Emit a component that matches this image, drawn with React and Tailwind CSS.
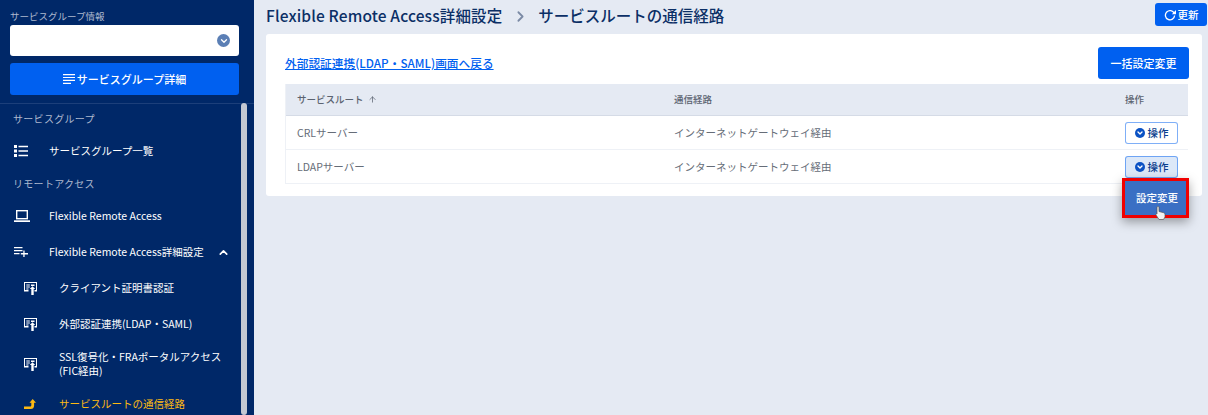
import React from 'react';
import { ChevronDown, ChevronRight, ChevronUp, ArrowUp } from 'lucide-react';

const font = { fontFamily: '"Noto Sans CJK JP", "Noto Sans", sans-serif' };

const ListIcon = () => (
    <svg width="14" height="12" viewBox="0 0 14 12" className="shrink-0">
        <path d="M0 0h3v3H0zM0 4.500h3v3H0zM0 9h3v3H0z" fill="#fff" />
        <path d="M4.500 .7H14v1.600H4.500zM4.500 5.200H14v1.600H4.500zM4.500 9.700H14v1.600H4.500z" fill="#fff" />
    </svg>
);

const LaptopIcon = () => (
    <svg width="16" height="12" viewBox="0 0 16 12" className="shrink-0">
        <rect x="2.700" y="0.700" width="10.600" height="8" fill="none" stroke="#fff" strokeWidth="1.400" />
        <path d="M0 10.300h16V12H0z" fill="#fff" />
    </svg>
);

const ListAddIcon = () => (
    <svg width="14" height="10" viewBox="0 0 14 10" className="shrink-0">
        <path d="M0 0h8.500v1.300H0zM0 3h8.500v1.300H0zM0 6h5.500v1.300H0z" fill="#fff" />
        <path d="M9.300 3.500h1.300v2.600H14v1.300h-3.400V10H9.300V7.400H6.800V6.100h2.500z" fill="#fff" />
    </svg>
);

// staggered text lines on the service group button
const DetailIcon = () => (
    <svg width="12" height="10" viewBox="0 0 12 10" className="shrink-0">
        <path d="M0 0h12v1.200H0zM0 2.900h12v1.200H0zM0 5.800h12v1.200H0zM0 8.700h8v1.200H0z" fill="#fff" />
    </svg>
);

// small card + arrow icon used by the submenu rows
const CardIcon = () => (
    <svg width="13" height="13" viewBox="0 0 13 13" fill="none" className="shrink-0">
        <path d="M0 0h13v9.500H10.500V8H12V1H1v7h3.500v1.500H0z" fill="#fff" />
        <path d="M2.300 2.600h3.500v1H2.300zM2.300 4.600h3.500v1H2.300zM2.300 6.500h2.200v1H2.300z" fill="#fff" />
        <path d="M7 2.500h3.500v1.500H7z" fill="#fff" />
        <path d="M7.300 13V7H5.800l2.700-2.700L11.200 7H9.700v6z" fill="#fff" />
    </svg>
);

const TurnIcon = () => (
    <svg width="13" height="10" viewBox="0 0 13 10" className="shrink-0">
        <path d="M0 7.500h6c.8 0 1.300-.5 1.300-1.300V3.800H5.500L8.700 0l3.300 3.800h-1.900v2.900c0 2-1.300 3.300-3.300 3.300H0z" fill="#fdb913" />
    </svg>
);

const RefreshIcon = () => (
    <svg width="12" height="12" viewBox="0 0 12 12" fill="none" className="shrink-0">
        <path d="M10.200 4.300A4.600 4.600 0 1 0 10.600 6.500" stroke="#fff" strokeWidth="1.300" />
        <path d="M12 1v4.200H7.800z" fill="#fff" />
    </svg>
);

const SectionLabel = ({ children }) => (
    <div className="h-[29px] pl-[13px] flex items-center text-[10px] text-[#aeb9cf] tracking-[0.3px]">{children}</div>
);

const MenuRow = ({ icon, children, right }) => (
    <div className="h-[36px] pl-[14px] pr-[24px] flex items-center text-[10.500px] text-white">
        <div className="w-[35px] shrink-0 flex items-center">{icon}</div>
        <span className="flex-1">{children}</span>
        {right}
    </div>
);

const SubRow = ({ icon, children, active, tall }) => (
    <div className={`pl-[24px] pr-[20px] flex items-center text-[10.500px] ${tall ? 'h-[44px] leading-[14px]' : 'h-[36px]'} ${active ? 'text-[#fdb913]' : 'text-white'}`}>
        <div className="w-[35px] shrink-0 flex items-center">{icon}</div>
        <span>{children}</span>
    </div>
);

const Sidebar = () => (
    <aside className="relative w-[254px] h-full shrink-0 bg-[#002868] overflow-hidden">
        {/* Service group picker */}
        <div className="pl-[10px] pr-[15px] pt-[9px] pb-[8px] border-b border-[#1c3f7a]">
            <div className="text-[9.500px] leading-[14px] text-[#aeb9cf]">サービスグループ情報</div>
            <div className="mt-[2px] h-[31px] rounded-[3px] bg-white flex items-center justify-end pr-[9px]">
                <span className="w-[13px] h-[13px] rounded-full bg-[#5b7fb5] flex items-center justify-center">
                    <ChevronDown size={10} strokeWidth={3} color="#fff" />
                </span>
            </div>
            <button className="mt-[7px] w-full h-[32px] rounded-[3px] bg-[#0060f0] text-white text-[11px] font-medium flex items-center justify-center gap-[2px]">
                <DetailIcon />
                サービスグループ詳細
            </button>
        </div>

        {/* Navigation */}
        <nav>
            <SectionLabel>サービスグループ</SectionLabel>
            <MenuRow icon={<ListIcon />}>サービスグループ一覧</MenuRow>
            <SectionLabel>リモートアクセス</SectionLabel>
            <MenuRow icon={<LaptopIcon />}>Flexible Remote Access</MenuRow>
            <MenuRow icon={<ListAddIcon />} right={<ChevronUp size={13} strokeWidth={3} />}>
                Flexible Remote Access詳細設定
            </MenuRow>
            <SubRow icon={<CardIcon />}>クライアント証明書認証</SubRow>
            <SubRow icon={<CardIcon />}>外部認証連携(LDAP・SAML)</SubRow>
            <SubRow icon={<CardIcon />} tall>SSL復号化・FRAポータルアクセス<br />(FIC経由)</SubRow>
            <SubRow icon={<TurnIcon />} active>サービスルートの通信経路</SubRow>
        </nav>

        {/* Scrollbar thumb */}
        <div className="absolute left-[241px] top-[103px] bottom-0 w-[6px] rounded-full bg-[#c3c8d2]" />
    </aside>
);

const Row = ({ name, open }) => (
    <div className="h-[34px] flex items-center border-b border-[#eef1f6] text-[10.500px] text-[#666d78]">
        <div className="w-[388px] pl-[11px]">{name}</div>
        <div className="flex-1">インターネットゲートウェイ経由</div>
        <div className="w-[64px] pr-[10px] flex justify-end">
            <button className={`w-[53px] h-[22px] rounded-[3px] border border-[#0060f0]/50 flex items-center justify-center gap-[3px] text-[10.500px] text-[#0b3f8f] font-medium ${open ? 'bg-[#dce8f8]' : 'bg-white'}`}>
                <span className="w-[10px] h-[10px] rounded-full bg-[#0b52c4] flex items-center justify-center">
                    <ChevronDown size={8} strokeWidth={4} color="#fff" />
                </span>
                操作
            </button>
        </div>
    </div>
);

const App = () => {
    return (
        <div style={font} className="w-[1208px] h-[415px] flex overflow-hidden bg-[#e5eaf3]">
            <Sidebar />

            <main className="flex-1 min-w-0 pl-[12px] pr-[1px] pt-[3px]">
                {/* Page title */}
                <div className="h-[31px] flex items-start justify-between">
                    <div className="flex items-center h-[26px] text-[15.500px] font-medium text-[#0b2f66]">
                        <span className="tracking-[0.15px]">Flexible Remote Access詳細設定</span>
                        <ChevronRight size={17} strokeWidth={2.500} color="#7b8aa5" className="ml-[10px] mr-[9px]" />
                        <span>サービスルートの通信経路</span>
                    </div>
                    <button className="w-[52px] h-[23px] rounded-[3px] bg-[#0060f0] text-white text-[10.500px] font-medium flex items-center justify-center gap-[2px]">
                        <RefreshIcon />
                        更新
                    </button>
                </div>

                {/* Card */}
                <div className="relative w-[936px] h-[162px] rounded-[3px] bg-white pl-[19px] pr-[13px] pt-[13px]">
                    <div className="h-[32px] flex items-center justify-between">
                        <a href="#" className="text-[11.700px] font-medium text-[#0060f0] underline">外部認証連携(LDAP・SAML)画面へ戻る</a>
                        <button className="w-[91px] h-[32px] rounded-[3px] bg-[#0060f0] text-white text-[11px] font-medium">一括設定変更</button>
                    </div>

                    <div className="mt-[5px] w-[903px] border-l border-[#eef1f6]">
                        <div className="h-[32px] flex items-center bg-[#e5eaf3] border-b border-[#d5dbe6] text-[9.500px] font-medium text-[#5b6370]">
                            <div className="w-[388px] pl-[11px] flex items-center gap-[4px]">
                                サービスルート
                                <ArrowUp size={9} strokeWidth={2} />
                            </div>
                            <div className="flex-1">通信経路</div>
                            <div className="w-[64px] pr-[10px] flex justify-end">
                                <span className="w-[53px]">操作</span>
                            </div>
                        </div>
                        <Row name="CRLサーバー" />
                        <Row name="LDAPサーバー" open />
                    </div>

                    {/* Open dropdown with highlight frame */}
                    <div className="absolute left-[856px] top-[144px] w-[67px] h-[40px] border-[3px] border-[#f00000] bg-[#3a6fc4] shadow-[0_4px_10px_rgba(0,0,0,0.35)] pl-[11px] pt-[9px] text-[10.500px] font-medium text-white">
                        設定変更
                    </div>
                    {/* Mouse pointer */}
                    <svg width="11" height="16" viewBox="0 0 11 15" className="absolute left-[889px] top-[171px]">
                        <path d="M3 1c.7 0 1 .5 1 1v4l4 1c1 .3 2 .8 2 2v2.500L8.500 14H4L1 9.500c-.5-1 .7-1.700 1-1V2c0-.5.400-1 1-1z" fill="#f3f3f3" stroke="#555" strokeWidth="0.700" />
                    </svg>
                </div>
            </main>
        </div>
    );
};

export default App;
